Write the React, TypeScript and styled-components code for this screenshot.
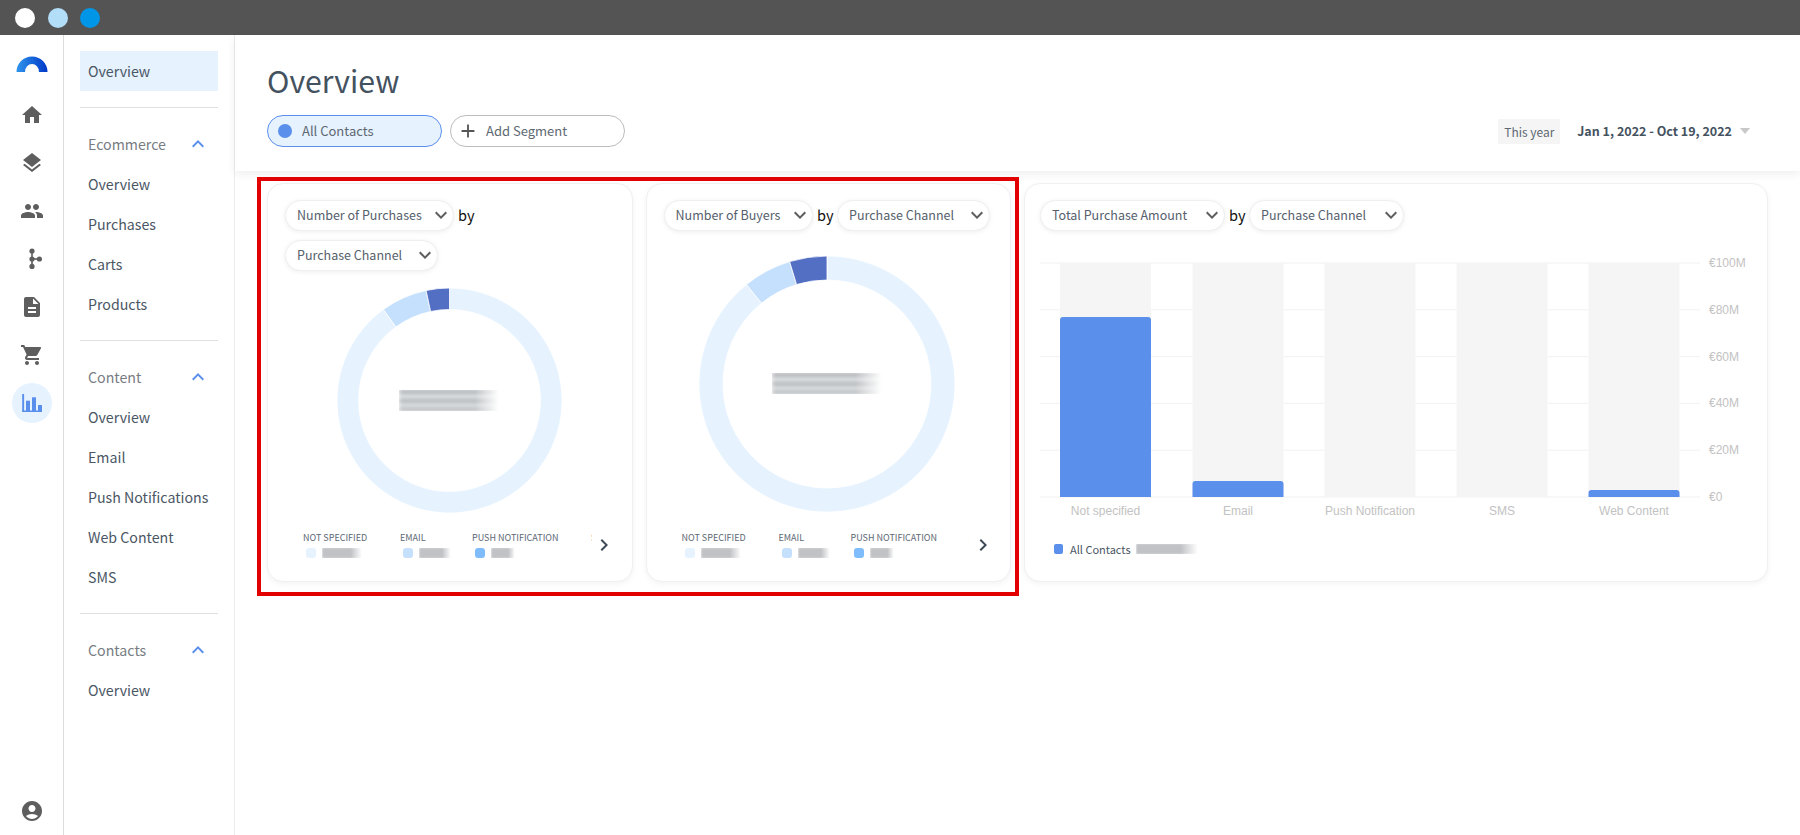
import React from "react";
import styled, { createGlobalStyle } from "styled-components";
import {
  MdHome,
  MdLayers,
  MdPeople,
  MdDescription,
  MdShoppingCart,
  MdAccountCircle,
  MdKeyboardArrowUp,
  MdKeyboardArrowDown,
  MdChevronRight,
  MdAdd,
} from "react-icons/md";

const FONT = `"Noto Sans CJK SC", "Noto Sans", sans-serif`;

const Global = createGlobalStyle`
  html, body { margin: 0; padding: 0; height: 100%; background: #fff; overflow: hidden; }
  body { font-family: ${FONT}; color: #4a5664; }
  * { box-sizing: border-box; }
`;

const Page = styled.div`
  position: relative;
  width: 1800px;
  height: 835px;
  display: flex;
  flex-direction: column;
  overflow: hidden;
`;

const TopBar = styled.div`
  height: 35px;
  flex: none;
  background: #545454;
  display: flex;
  align-items: center;
  gap: 12.5px;
  padding-left: 15px;
`;

const Light = styled.span<{ $color: string }>`
  width: 20px;
  height: 20px;
  border-radius: 50%;
  background: ${(p) => p.$color};
`;

const Body = styled.div`
  flex: 1;
  display: flex;
  min-height: 0;
`;

const Rail = styled.nav`
  width: 64px;
  flex: none;
  border-right: 1px solid #dcdcdc;
  display: flex;
  flex-direction: column;
  padding-top: 4px;
`;

const RailSlot = styled.div<{ $bottom?: boolean; $logo?: boolean }>`
  height: 48px;
  flex: none;
  display: flex;
  align-items: center;
  justify-content: center;
  color: #5e5e5e;
  font-size: 24px;
  margin-top: ${(p) => (p.$bottom ? "auto" : "0")};
  margin-bottom: ${(p) => (p.$logo ? "4px" : "0")};
`;

const ActiveCircle = styled.span`
  width: 40px;
  height: 40px;
  border-radius: 50%;
  background: #e6f2fe;
  display: flex;
  align-items: center;
  justify-content: center;
`;

const SideNav = styled.nav`
  width: 171px;
  flex: none;
  border-right: 1px solid #ececec;
  padding: 16px 16px 0;
`;

const NavItem = styled.div<{ $active?: boolean }>`
  height: 40px;
  display: flex;
  align-items: center;
  padding-left: 8px;
  font-size: 14.2px;
  line-height: 20px;
  color: #4a5664;
  background: ${(p) => (p.$active ? "#e6f2fe" : "transparent")};
`;

const NavHead = styled.div`
  height: 40px;
  display: flex;
  align-items: center;
  justify-content: space-between;
  padding: 0 8px;
  font-size: 14.2px;
  line-height: 20px;
  color: #777c82;
  svg {
    color: #5b8fec;
    font-size: 24px;
  }
`;

const NavRule = styled.hr`
  border: 0;
  height: 1px;
  background: #e0e0e0;
  margin: 16px 0;
`;

const Main = styled.main`
  flex: 1;
  min-width: 0;
  display: flex;
  flex-direction: column;
`;

const Header = styled.header`
  position: relative;
  z-index: 1;
  height: 136px;
  flex: none;
  background: #fff;
  box-shadow: 0 3px 9px rgba(0, 0, 0, 0.07);
  padding: 24px 50px 0 32px;
`;

const Title = styled.h1`
  margin: -1px 0 1px;
  font-size: 30.2px;
  line-height: 44px;
  font-weight: 400;
  color: #44525f;
`;

const HeaderRow = styled.div`
  margin-top: 13px;
  display: flex;
  align-items: center;
  justify-content: space-between;
`;

const Chips = styled.div`
  display: flex;
  gap: 8px;
`;

const Chip = styled.div<{ $active?: boolean }>`
  width: 175px;
  height: 32px;
  border-radius: 16px;
  border: 1px solid ${(p) => (p.$active ? "#5b8fec" : "#bcbcbc")};
  background: ${(p) => (p.$active ? "#e6f2fe" : "#fff")};
  display: flex;
  align-items: center;
  font-size: 13px;
  line-height: 18px;
  color: #5d6873;
  padding-left: ${(p) => (p.$active ? "10px" : "6px")};
  gap: ${(p) => (p.$active ? "10px" : "7px")};
  svg {
    font-size: 22px;
    color: #555;
  }
`;

const ChipDot = styled.span`
  width: 14px;
  height: 14px;
  border-radius: 50%;
  background: #5b8fec;
`;

const RangeGroup = styled.div`
  display: flex;
  align-items: center;
`;

const RangeTag = styled.span`
  width: 62px;
  height: 25px;
  background: #f5f5f5;
  font-size: 12px;
  line-height: 25px;
  text-align: center;
  color: #5d6873;
  margin-right: 17px;
`;

const RangeDates = styled.span`
  font-size: 12.5px;
  line-height: 20px;
  font-weight: 700;
  color: #44525f;
`;

const RangeCaret = styled.span`
  width: 0;
  height: 0;
  margin-left: 8px;
  border-left: 5px solid transparent;
  border-right: 5px solid transparent;
  border-top: 6px solid #c8c8c8;
`;

const Cards = styled.section`
  display: flex;
  gap: 13px;
  padding: 12px 32px 0;
  align-items: flex-start;
`;

const Card = styled.article<{ $wide?: boolean }>`
  width: ${(p) => (p.$wide ? "743.5px" : "365.5px")};
  height: 398.5px;
  flex: none;
  border: 1px solid #f0f0f0;
  border-radius: 16px;
  background: #fff;
  box-shadow: 0 2px 6px rgba(0, 0, 0, 0.05);
  padding: 15.5px 15px 0 ${(p) => (p.$wide ? "15px" : "17px")};
  display: flex;
  flex-direction: column;
`;

const Filters = styled.div`
  display: flex;
  flex-wrap: wrap;
  align-items: center;
  row-gap: 9px;
`;

const Select = styled.div<{ $width: number }>`
  width: ${(p) => p.$width}px;
  height: 31px;
  border-radius: 16px;
  border: 1px solid #efefef;
  background: #fff;
  box-shadow: 0 1px 5px rgba(0, 0, 0, 0.07);
  display: flex;
  align-items: center;
  justify-content: space-between;
  padding: 0 0 0 11px;
  font-size: 12.5px;
  line-height: 18px;
  color: #55606c;
  white-space: nowrap;
  svg {
    font-size: 24px;
    color: #5e5e5e;
  }
`;

const By = styled.span`
  font-size: 14.5px;
  line-height: 20px;
  color: #111;
  margin: 0 3.5px 0 4px;
`;

const DonutWrap = styled.div<{ $size: number; $top: number; $shift: number }>`
  width: ${(p) => p.$size}px;
  height: ${(p) => p.$size}px;
  flex: none;
  margin: ${(p) => p.$top}px 0 0 ${(p) => p.$shift}px;
  display: grid;
  place-items: center;
  & > * {
    grid-area: 1 / 1;
  }
`;

const CenterBlur = styled.span<{ $wide: number }>`
  width: ${(p) => p.$wide}px;
  height: 21px;
  filter: blur(2px);
  background: linear-gradient(
    180deg,
    #92979d 0 14%,
    #dfe1e3 14% 42%,
    #aeb3b7 42% 60%,
    #e3e5e6 60% 84%,
    #a0a5aa 84% 100%
  );
  mask-image: linear-gradient(90deg, #000 76%, transparent 100%);
`;

const LegendRow = styled.div`
  margin-top: auto;
  margin-bottom: 21px;
  display: flex;
  align-items: center;
`;

const LegendClip = styled.div`
  width: 288.5px;
  margin: 0 0.5px 0 18px;
  overflow: hidden;
  display: flex;
  gap: 33px;
`;

const LegendItem = styled.div<{ $width: number }>`
  flex: none;
  width: ${(p) => p.$width}px;
`;

const LegendLabel = styled.div`
  font-size: 9px;
  line-height: 16px;
  color: #5d6873;
  white-space: nowrap;
`;

const LegendValue = styled.div`
  display: flex;
  align-items: center;
  margin: 1px 0 1px 3px;
  gap: 6px;
  height: 12px;
`;

const Swatch = styled.span<{ $color: string }>`
  flex: none;
  width: 10px;
  height: 10px;
  border-radius: 3px;
  background: ${(p) => p.$color};
`;

const ValueBlur = styled.span<{ $wide: number }>`
  flex: none;
  width: ${(p) => p.$wide}px;
  height: 10px;
  filter: blur(0.9px);
  background: repeating-linear-gradient(180deg, #777c82 0 1.5px, #e4e5e7 1.5px 3px);
  mask-image: linear-gradient(90deg, #000 72%, transparent 100%);
`;

const NextBtn = styled.span`
  font-size: 24px;
  display: flex;
  color: #3d4a57;
`;

const ChartSvg = styled.svg`
  display: block;
  flex: none;
  margin-top: 24px;
`;

const AxisText = styled.text`
  font-family: "Liberation Sans", sans-serif;
  font-size: 12px;
  fill: #c2c2c2;
`;

const ChartLegend = styled.div`
  display: flex;
  align-items: center;
  margin: 24px 0 0 14px;
`;

const ChartSwatch = styled.span`
  width: 9px;
  height: 10px;
  border-radius: 2px;
  background: #5b8fec;
  margin-right: 7px;
`;

const ChartLegendText = styled.span`
  font-size: 11px;
  line-height: 16px;
  color: #4a5664;
  margin-right: 5px;
`;

const Annotation = styled.div`
  position: absolute;
  left: 257px;
  top: 177px;
  width: 762px;
  height: 419px;
  border: 4px solid #e30000;
  pointer-events: none;
  z-index: 2;
`;

const Logo = () => (
  <svg width="32" height="17" viewBox="0 0 32 17">
    <defs>
      <linearGradient id="logoGrad" x1="0" x2="1" y1="0" y2="0">
        <stop offset="0" stopColor="#2f95ec" />
        <stop offset="1" stopColor="#0038c8" />
      </linearGradient>
    </defs>
    <path d="M0.5 17A15.5 15.5 0 0 1 31.5 17H23A7 8 0 0 0 9 17Z" fill="url(#logoGrad)" />
  </svg>
);

const FlowIcon = () => (
  <svg width="24" height="24" viewBox="0 0 24 24" fill="currentColor">
    <rect x="11.2" y="4" width="1.6" height="15" />
    <rect x="12" y="11.2" width="7" height="1.6" />
    <circle cx="12" cy="4" r="2.6" />
    <circle cx="12" cy="19.4" r="2.6" />
    <circle cx="12" cy="12" r="2.6" />
    <circle cx="19.4" cy="12" r="2.6" />
  </svg>
);

const BarsIcon = () => (
  <svg width="24" height="24" viewBox="0 0 24 24" fill="#5b8fec">
    <rect x="2.2" y="3" width="1.9" height="18" />
    <rect x="2.2" y="19.5" width="19.8" height="1.5" />
    <rect x="6" y="9.7" width="4" height="11" />
    <rect x="12" y="6.3" width="4" height="14" />
    <rect x="18" y="14" width="4" height="7" />
  </svg>
);

const polar = (cx: number, cy: number, r: number, deg: number) => {
  const a = ((deg - 90) * Math.PI) / 180;
  return [cx + r * Math.cos(a), cy + r * Math.sin(a)];
};

const arcPath = (c: number, ro: number, ri: number, from: number, to: number) => {
  const [x1, y1] = polar(c, c, ro, from);
  const [x2, y2] = polar(c, c, ro, to);
  const [x3, y3] = polar(c, c, ri, to);
  const [x4, y4] = polar(c, c, ri, from);
  const large = to - from > 180 ? 1 : 0;
  return `M${x1} ${y1}A${ro} ${ro} 0 ${large} 1 ${x2} ${y2}L${x3} ${y3}A${ri} ${ri} 0 ${large} 0 ${x4} ${y4}Z`;
};

type DonutProps = { size: number; inner: number; dark: number; mid: number; top: number; shift: number; blur: number };

const Donut = ({ size, inner, dark, mid, top, shift, blur }: DonutProps) => {
  const c = size / 2;
  const segs = [
    { from: 0, to: 360 - mid, color: "#e6f3ff" },
    { from: 360 - mid, to: 360 - dark, color: "#c5e0fd" },
    { from: 360 - dark, to: 360, color: "#526fc4" },
  ];
  return (
    <DonutWrap $size={size} $top={top} $shift={shift}>
      <svg width={size} height={size} viewBox={`0 0 ${size} ${size}`}>
        {segs.map((s) => (
          <path key={s.color} d={arcPath(c, c, inner, s.from, s.to)} fill={s.color} stroke="#fff" strokeWidth="0.8" />
        ))}
      </svg>
      <CenterBlur $wide={blur} />
    </DonutWrap>
  );
};

const Legend = () => (
  <LegendRow>
    <LegendClip>
      <LegendItem $width={64}>
        <LegendLabel>NOT SPECIFIED</LegendLabel>
        <LegendValue>
          <Swatch $color="#e6f3ff" />
          <ValueBlur $wide={40} />
        </LegendValue>
      </LegendItem>
      <LegendItem $width={39}>
        <LegendLabel>EMAIL</LegendLabel>
        <LegendValue>
          <Swatch $color="#c5e0fd" />
          <ValueBlur $wide={32} />
        </LegendValue>
      </LegendItem>
      <LegendItem $width={86}>
        <LegendLabel>PUSH NOTIFICATION</LegendLabel>
        <LegendValue>
          <Swatch $color="#7fbcfb" />
          <ValueBlur $wide={24} />
        </LegendValue>
      </LegendItem>
      <LegendItem $width={20}>
        <LegendLabel>SMS</LegendLabel>
      </LegendItem>
    </LegendClip>
    <NextBtn>
      <MdChevronRight />
    </NextBtn>
  </LegendRow>
);

const Dropdown = ({ label, width }: { label: string; width: number }) => (
  <Select $width={width}>
    {label}
    <MdKeyboardArrowDown />
  </Select>
);

const BARS = [
  { label: "Not specified", x: 20, value: 180 },
  { label: "Email", x: 152.5, value: 16 },
  { label: "Push Notification", x: 284.5, value: 0 },
  { label: "SMS", x: 416.5, value: 0 },
  { label: "Web Content", x: 548.5, value: 7 },
];
const TICKS = ["€100M", "€80M", "€60M", "€40M", "€20M", "€0"];
const BASE = 242;
const STEP = 46.8;

const BarChart = () => (
  <ChartSvg width="720" height="262" viewBox="0 0 720 262">
    {TICKS.map((t, i) => {
      const y = BASE - (5 - i) * STEP;
      return (
        <g key={t}>
          <line x1="0" x2="660" y1={y} y2={y} stroke="#f1f1f1" />
          <AxisText x="669" y={y + 4}>
            {t}
          </AxisText>
        </g>
      );
    })}
    {BARS.map((b) => (
      <g key={b.label}>
        <rect x={b.x} y={BASE - 5 * STEP} width="91" height={5 * STEP} fill="#f5f5f5" />
        {b.value > 0 && <path d={`M${b.x} ${BASE}V${BASE - b.value + 3}q0 -3 3 -3H${b.x + 88}q3 0 3 3V${BASE}Z`} fill="#5b8fec" />}
        <AxisText x={b.x + 45.5} y={BASE + 18} textAnchor="middle">
          {b.label}
        </AxisText>
      </g>
    ))}
  </ChartSvg>
);

const RAIL = [MdHome, MdLayers, MdPeople, FlowIcon, MdDescription, MdShoppingCart];

export default function App() {
  return (
    <Page>
      <Global />
      <TopBar>
        <Light $color="#ffffff" />
        <Light $color="#b3def8" />
        <Light $color="#0096e8" />
      </TopBar>
      <Body>
        <Rail>
          <RailSlot $logo>
            <Logo />
          </RailSlot>
          {RAIL.map((Icon, i) => (
            <RailSlot key={i}>
              <Icon />
            </RailSlot>
          ))}
          <RailSlot>
            <ActiveCircle>
              <BarsIcon />
            </ActiveCircle>
          </RailSlot>
          <RailSlot $bottom>
            <MdAccountCircle />
          </RailSlot>
        </Rail>
        <SideNav>
          <NavItem $active>Overview</NavItem>
          <NavRule />
          <NavHead>
            Ecommerce
            <MdKeyboardArrowUp />
          </NavHead>
          <NavItem>Overview</NavItem>
          <NavItem>Purchases</NavItem>
          <NavItem>Carts</NavItem>
          <NavItem>Products</NavItem>
          <NavRule />
          <NavHead>
            Content
            <MdKeyboardArrowUp />
          </NavHead>
          <NavItem>Overview</NavItem>
          <NavItem>Email</NavItem>
          <NavItem>Push Notifications</NavItem>
          <NavItem>Web Content</NavItem>
          <NavItem>SMS</NavItem>
          <NavRule />
          <NavHead>
            Contacts
            <MdKeyboardArrowUp />
          </NavHead>
          <NavItem>Overview</NavItem>
        </SideNav>
        <Main>
          <Header>
            <Title>Overview</Title>
            <HeaderRow>
              <Chips>
                <Chip $active>
                  <ChipDot />
                  All Contacts
                </Chip>
                <Chip>
                  <MdAdd />
                  Add Segment
                </Chip>
              </Chips>
              <RangeGroup>
                <RangeTag>This year</RangeTag>
                <RangeDates>Jan 1, 2022 - Oct 19, 2022</RangeDates>
                <RangeCaret />
              </RangeGroup>
            </HeaderRow>
          </Header>
          <Cards>
            <Card>
              <Filters>
                <Dropdown label="Number of Purchases" width={169} />
                <By>by</By>
                <Dropdown label="Purchase Channel" width={153} />
              </Filters>
              <Donut size={225} inner={91} dark={12} mid={36} top={17} shift={51.5} blur={100} />
              <Legend />
            </Card>
            <Card>
              <Filters>
                <Dropdown label="Number of Buyers" width={149.5} />
                <By>by</By>
                <Dropdown label="Purchase Channel" width={153} />
              </Filters>
              <Donut size={256} inner={104} dark={17} mid={39} top={25} shift={35} blur={110} />
              <Legend />
            </Card>
            <Card $wide>
              <Filters>
                <Dropdown label="Total Purchase Amount" width={185} />
                <By>by</By>
                <Dropdown label="Purchase Channel" width={155} />
              </Filters>
              <BarChart />
              <ChartLegend>
                <ChartSwatch />
                <ChartLegendText>All Contacts</ChartLegendText>
                <ValueBlur $wide={62} />
              </ChartLegend>
            </Card>
          </Cards>
        </Main>
      </Body>
      <Annotation />
    </Page>
  );
}
